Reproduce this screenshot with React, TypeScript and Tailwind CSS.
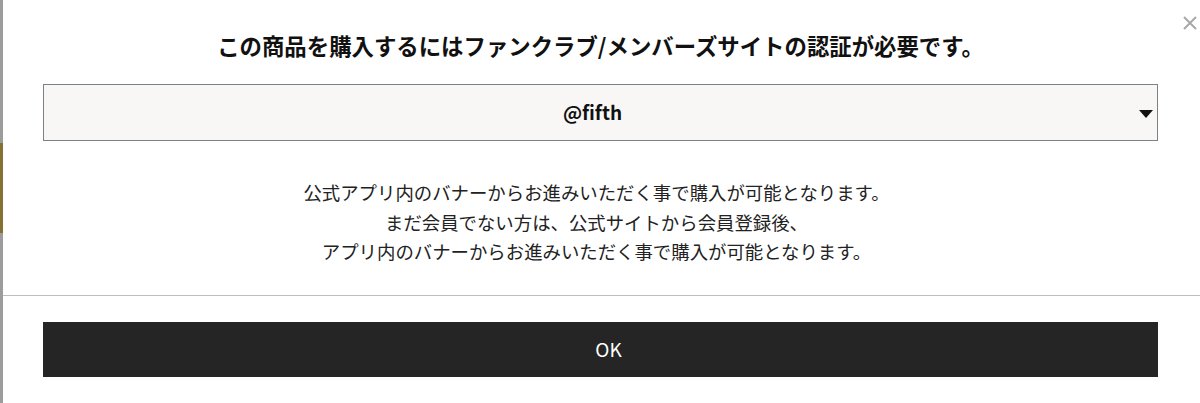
import React from 'react';

const jp = { fontFamily: '"Noto Sans CJK JP", "Noto Sans", sans-serif' };

function CloseIcon() {
  return (
    <svg width="14" height="14" viewBox="0 0 14 14" className="absolute top-[16px] right-[3px]">
      <path d="M1 1 L13 13 M13 1 L1 13" stroke="#a8a8a8" strokeWidth="2" />
    </svg>
  );
}

export default function App() {
  return (
    <div className="w-[1200px] h-[403px] flex bg-white overflow-hidden" style={jp}>
      {/* page behind the overlay */}
      <div className="w-[3px] h-full bg-[#9c9c9c] flex flex-col">
        <div className="h-[143px]" />
        <div className="h-[90px] bg-[#857232]" />
      </div>

      <div className="flex-1 relative bg-white flex flex-col">
        <CloseIcon />

        <div className="pl-[40px] pr-[42px] pt-[28px]">
          <h2 className="text-center text-[22.4px] leading-[34px] font-bold text-[#111]">
            この商品を購入するにはファンクラブ/メンバーズサイトの認証が必要です。
          </h2>

          <div className="mt-[22px] h-[57px] border border-[#808080] bg-[#f8f7f6] relative flex items-center justify-center pr-[16px]">
            <span className="text-[19px] font-bold text-[#111]">@fifth</span>
            <svg width="14" height="8" viewBox="0 0 14 8" className="absolute right-[4px] top-[25px]">
              <path d="M0 0 L14 0 L7 8 Z" fill="#111" />
            </svg>
          </div>

          <div className="mt-[37px] text-center text-[18.4px] leading-[29.5px] text-[#222] pr-[8px]">
            <p>公式アプリ内のバナーからお進みいただく事で購入が可能となります。</p>
            <p>まだ会員でない方は、公式サイトから会員登録後、</p>
            <p>アプリ内のバナーからお進みいただく事で購入が可能となります。</p>
          </div>
        </div>

        <div className="mt-[28px] h-px bg-[#bdbdbd]" />

        <div className="pl-[40px] pr-[42px] pt-[26px]">
          <button className="w-full h-[55px] bg-[#252525] text-white text-[19px] flex items-center justify-center pl-[16px]">
            OK
          </button>
        </div>
      </div>
    </div>
  );
}
